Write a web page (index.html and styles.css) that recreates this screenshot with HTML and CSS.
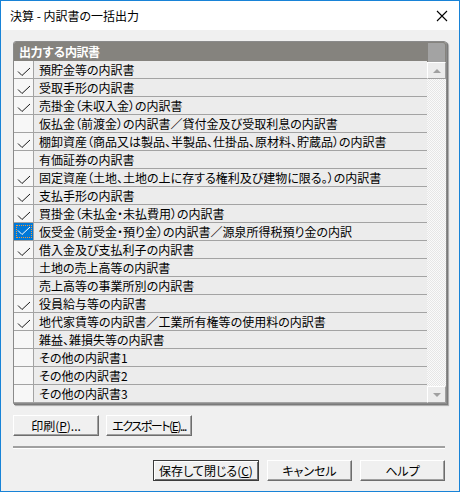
FILE: index.html
```html
<!DOCTYPE html>
<html lang="ja">
<head>
    <meta charset="UTF-8">
    <link rel="stylesheet" href="styles.css">
    <title>決算 - 内訳書の一括出力</title>
</head>
<body>
    <div class="window">
        <div class="titlebar">
            <span class="title">決算 - 内訳書の一括出力</span>
            <svg class="close" width="12" height="12" viewBox="0 0 12 12">
                <path d="M1 1 L11 11 M11 1 L1 11" stroke="#000" stroke-width="1.1" fill="none"/>
            </svg>
        </div>
        <div class="content">
            <div class="listframe">
                <div class="listmain">
                    <div class="listhead">出力する内訳書</div>
                    <div class="rows" id="rows"></div>
                </div>
                <div class="scrollbar">
                    <div class="scrollhead"></div>
                    <div class="sbtn"><span class="tri up"></span></div>
                    <div class="track"></div>
                    <div class="sbtn"><span class="tri down"></span></div>
                </div>
            </div>
            <div class="tools">
                <button class="btn">印刷(<u>P</u>)...</button>
                <button class="btn narrow">エクスポート(<u>E</u>)...</button>
            </div>
            <div class="separator"></div>
            <div class="footer">
                <button class="btn default">保存して閉じる(<u>C</u>)</button>
                <button class="btn">キャンセル</button>
                <button class="btn">ヘルプ</button>
            </div>
        </div>
    </div>

    <script>
        const items = [
            ["預貯金等の内訳書", 1],
            ["受取手形の内訳書", 1],
            ["売掛金（未収入金）の内訳書", 1],
            ["仮払金（前渡金）の内訳書／貸付金及び受取利息の内訳書", 0],
            ["棚卸資産（商品又は製品、半製品、仕掛品、原材料、貯蔵品）の内訳書", 1],
            ["有価証券の内訳書", 0],
            ["固定資産（土地、土地の上に存する権利及び建物に限る。）の内訳書", 1],
            ["支払手形の内訳書", 1],
            ["買掛金（未払金・未払費用）の内訳書", 1],
            ["仮受金（前受金・預り金）の内訳書／源泉所得税預り金の内訳", 2],
            ["借入金及び支払利子の内訳書", 1],
            ["土地の売上高等の内訳書", 0],
            ["売上高等の事業所別の内訳書", 0],
            ["役員給与等の内訳書", 1],
            ["地代家賃等の内訳書／工業所有権等の使用料の内訳書", 1],
            ["雑益、雑損失等の内訳書", 0],
            ["その他の内訳書1", 0],
            ["その他の内訳書2", 0],
            ["その他の内訳書3", 0]
        ];

        let check = `<svg width="14" height="10" viewBox="0 0 14 10"><polyline points="1,4.5 5,8.5 13,1" fill="none" stroke="currentColor" stroke-width="1"/></svg>`;

        let rows = document.getElementById("rows");
        items.forEach(([name, state]) => {
            rows.innerHTML += `<div class="row">
                <div class="chk ${state == 2 ? "selected" : ""}">${state ? check : ""}</div>
                <div class="name">${name}</div>
            </div>`;
        });
    </script>
</body>
</html>
```

FILE: styles.css
```css
* {
    margin: 0;
    padding: 0;
    box-sizing: border-box;
}

body {
    font-family: "Noto Sans CJK JP", "Noto Sans", sans-serif;
    font-size: 12px;
    color: #000;
    background: #fff;
}

.window {
    width: 460px;
    height: 492px;
    border: 1px solid #1883d7;
    background: #f0f0f0;
    display: flex;
    flex-direction: column;
}

.titlebar {
    height: 29px;
    background: #fff;
    display: flex;
    align-items: center;
    justify-content: space-between;
    padding: 0 11px 0 9px;
}

.title {
    font-size: 12px;
    font-feature-settings: "palt";
}

.content {
    padding: 11px 13px 0 12px;
}

.listframe {
    display: flex;
    width: 434px;
    border: 1px solid #8a8a8a;
    border-radius: 3px 3px 0 0;
    box-shadow: 1px 1px 0 #7a7a7a, 2px 2px 1px #a8a8a8;
    background: #ececec;
    overflow: hidden;
}

.listmain {
    flex: 1;
}

.listhead {
    height: 19px;
    background: #85837e;
    color: #fff;
    font-weight: bold;
    padding-left: 5px;
    line-height: 19px;
    font-size: 12px;
    letter-spacing: -0.5px;
}

.row {
    display: flex;
    height: 18px;
    border-bottom: 1px solid #a3a3a3;
}

.chk {
    width: 20px;
    border-right: 1px solid #a3a3a3;
    background: #f7f7f7;
    color: #1a1a1a;
    display: flex;
    align-items: flex-end;
    justify-content: center;
    padding-bottom: 1px;
}

.chk.selected {
    background: #0078d7;
    color: #fff;
    outline: 1px dotted #f39a3a;
    outline-offset: -3px;
    align-items: center;
}

.name {
    flex: 1;
    padding-left: 5px;
    line-height: 17px;
    white-space: nowrap;
    overflow: hidden;
    font-feature-settings: "palt";
}

.scrollbar {
    width: 19px;
    display: flex;
    flex-direction: column;
    background: #85837e;
}

.scrollhead {
    height: 19px;
    background: #a3a3a3;
    margin: 1px 1px 0 1px;
    border-radius: 0 2px 0 0;
}

.sbtn {
    height: 17px;
    background: #ececec;
    border: 1px solid #fff;
    border-right-color: #a0a0a0;
    border-bottom-color: #a0a0a0;
    display: flex;
    align-items: center;
    justify-content: center;
}

.tri {
    width: 0;
    height: 0;
    border-left: 4px solid transparent;
    border-right: 4px solid transparent;
}

.tri.up {
    border-bottom: 4px solid #a0a0a0;
}

.tri.down {
    border-top: 4px solid #a0a0a0;
}

.track {
    flex: 1;
    background: repeating-conic-gradient(#fafafa 0 25%, #e6e6e6 0 50%) 0 0 / 2px 2px;
}

.btn {
    height: 21px;
    padding: 0;
    font-family: inherit;
    font-size: 12px;
    background: #f0f0f0;
    border: 1px solid;
    border-color: #fff #6d6d6d #6d6d6d #fff;
    box-shadow: inset -1px -1px 0 #a0a0a0;
    font-feature-settings: "palt";
    white-space: nowrap;
    overflow: hidden;
}

.tools {
    display: flex;
    gap: 7px;
    margin-top: 11px;
}

.tools .btn {
    width: 86px;
}

.tools .btn.narrow {
    letter-spacing: -1.4px;
}

.separator {
    margin-top: 10px;
    width: 432px;
    border-top: 2px solid #a0a0a0;
    border-bottom: 1px solid #fff;
}

.footer {
    display: flex;
    justify-content: flex-end;
    gap: 8px;
    margin-top: 11px;
    padding-right: 1px;
}

.footer .btn {
    width: 85px;
}

.footer .btn.default {
    width: 106px;
    border: 1px solid #3c3c3c;
    box-shadow: inset 1px 1px 0 #fff, inset -1px -1px 0 #6d6d6d;
}
```
